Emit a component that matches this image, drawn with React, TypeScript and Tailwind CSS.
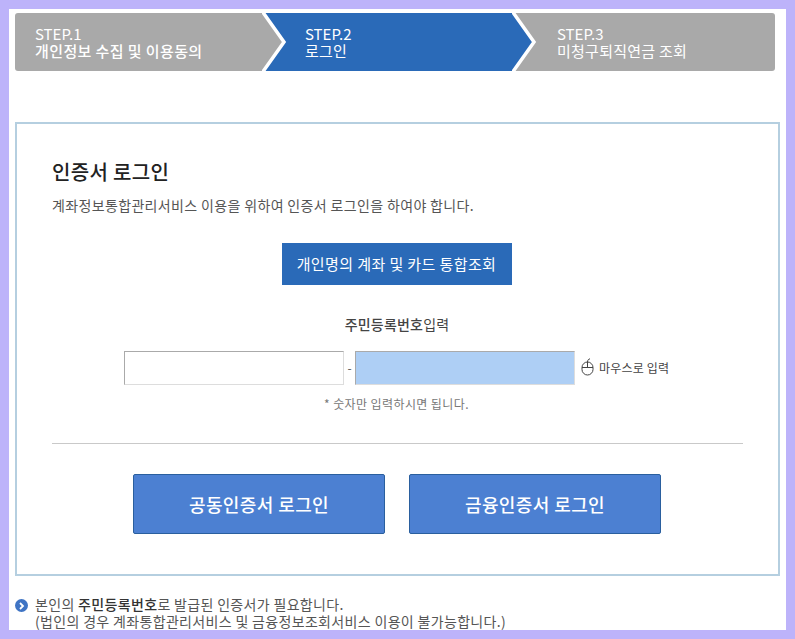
import React from "react";

const font = "font-['Noto_Sans_CJK_KR','Noto_Sans',sans-serif]";

function Step({
  no,
  label,
  active,
  bold,
  arrow,
  className,
}: {
  no: string;
  label: string;
  active?: boolean;
  bold?: boolean;
  arrow?: boolean;
  className: string;
}) {
  const fill = active ? "#2a6ab8" : "#a9a9a9";
  return (
    <div className={`relative flex flex-col justify-center text-[15px] leading-[17px] text-white ${active ? "bg-[#2a6ab8]" : "bg-[#a9a9a9]"} ${className}`}>
      <span>{no}</span>
      <span className={bold ? "font-medium tracking-[0.4px]" : "tracking-[0.25px]"}>{label}</span>
      {arrow && (
        <svg className="absolute left-full top-0 z-10" width="26" height="58" viewBox="0 0 26 58">
          <path d="M0 0 L1 0 L22 29 L1 58 L0 58 Z" fill={fill} />
          <path d="M-1 -2 L21 29 L-1 60" fill="none" stroke="#fff" strokeWidth="3.5" transform="translate(1 0)" />
        </svg>
      )}
    </div>
  );
}

function MouseIcon() {
  return (
    <svg width="13" height="18" viewBox="0 0 13 18" fill="none" stroke="#444" strokeWidth="1" className="mt-[-3px] shrink-0">
      <rect x="1" y="4" width="11" height="13" rx="5.5" />
      <path d="M1 9.5 H12 M6.5 4 V9.5 M6.5 4 C6.5 2 7.5 1.2 9 0.8" />
    </svg>
  );
}

export default function App() {
  return (
    <div className={`h-[639px] w-[795px] overflow-hidden bg-[#bdb3fa] pb-[9px] pl-[9px] pr-[9px] pt-[9px] ${font}`}>
      <div className="h-[621px] w-[777px] overflow-hidden bg-white pl-[6px] pt-[4px]">
        {/* steps */}
        <div className="flex h-[58px] w-[760px]">
          <Step no="STEP.1" label="개인정보 수집 및 이용동의" bold arrow className="w-[247px] rounded-l-[3px] pl-[20px]" />
          <Step no="STEP.2" label="로그인" active arrow className="w-[250px] pl-[43px]" />
          <Step no="STEP.3" label="미청구퇴직연금 조회" className="w-[263px] rounded-r-[3px] pl-[45px]" />
        </div>

        {/* card */}
        <div className="mt-[51px] flex h-[454px] w-[765px] flex-col border-2 border-[#b5cfe0] px-[35px] pt-[34px]">
          <h2 className="text-[20px] font-medium leading-[28px] tracking-[0.35px] text-[#222]">인증서 로그인</h2>
          <p className="mt-[9px] text-[14px] leading-[20px] tracking-[0.35px] text-[#555]">
            계좌정보통합관리서비스 이용을 위하여 인증서 로그인을 하여야 합니다.
          </p>

          <div className="mt-[28px] flex justify-center">
            <button className="ml-[-2px] h-[42px] w-[230px] bg-[#2a6ab8] text-[15px] tracking-[0.4px] text-white">
              개인명의 계좌 및 카드 통합조회
            </button>
          </div>

          <div className="mt-[27px] pr-[1px] text-center text-[14px] leading-[24px] tracking-[0.2px] text-[#444]">
            <b className="font-medium">주민등록번호</b>입력
          </div>

          <div className="mt-[15px] ml-[72px] flex items-center">
            <input className="h-[34px] w-[220px] border border-[#aaa] border-b-[#ddd] border-r-[#ddd] bg-white" readOnly />
            <span className="w-[11px] text-center text-[12px] text-[#555]">-</span>
            <input className="h-[34px] w-[220px] border border-[#aaa] border-b-[#ddd] border-r-[#ddd] bg-[#aecff5]" readOnly />
            <span className="ml-[6px] flex items-center gap-[5px] text-[12px] leading-[16px] tracking-[0.2px] text-[#444]">
              <MouseIcon />
              <span className="mt-[-1px]">마우스로 입력</span>
            </span>
          </div>

          <div className="mt-[10px] pr-[2px] text-center text-[12px] leading-[18px] tracking-[0.4px] text-[#777]">* 숫자만 입력하시면 됩니다.</div>

          <hr className="mt-[30px] w-[691px] border-t border-[#c9c9c9]" />

          <div className="mt-[30px] ml-[81px] flex gap-[24px]">
            <button className="h-[60px] w-[252px] rounded-[2px] border border-[#2a5f9e] bg-[#4c80d2] text-[18px] font-medium tracking-[0.4px] text-white">
              공동인증서 로그인
            </button>
            <button className="h-[60px] w-[252px] rounded-[2px] border border-[#2a5f9e] bg-[#4c80d2] text-[18px] font-medium tracking-[0.4px] text-white">
              금융인증서 로그인
            </button>
          </div>
        </div>

        {/* note */}
        <div className="mt-[20px] flex gap-[7px] text-[14px] leading-[17px] tracking-[0.33px] text-[#555]">
          <span className="mt-[3px] flex h-[13px] w-[13px] shrink-0 items-center justify-center rounded-full bg-[#3f74c4]">
            <svg width="7" height="8" viewBox="0 0 7 8" fill="none" stroke="#fff" strokeWidth="1.8">
              <path d="M2 1 L5 4 L2 7" />
            </svg>
          </span>
          <div>
            <p>
              본인의 <b className="font-medium text-[#333]">주민등록번호</b>로 발급된 인증서가 필요합니다.
            </p>
            <p>(법인의 경우 계좌통합관리서비스 및 금융정보조회서비스 이용이 불가능합니다.)</p>
          </div>
        </div>
      </div>
    </div>
  );
}
